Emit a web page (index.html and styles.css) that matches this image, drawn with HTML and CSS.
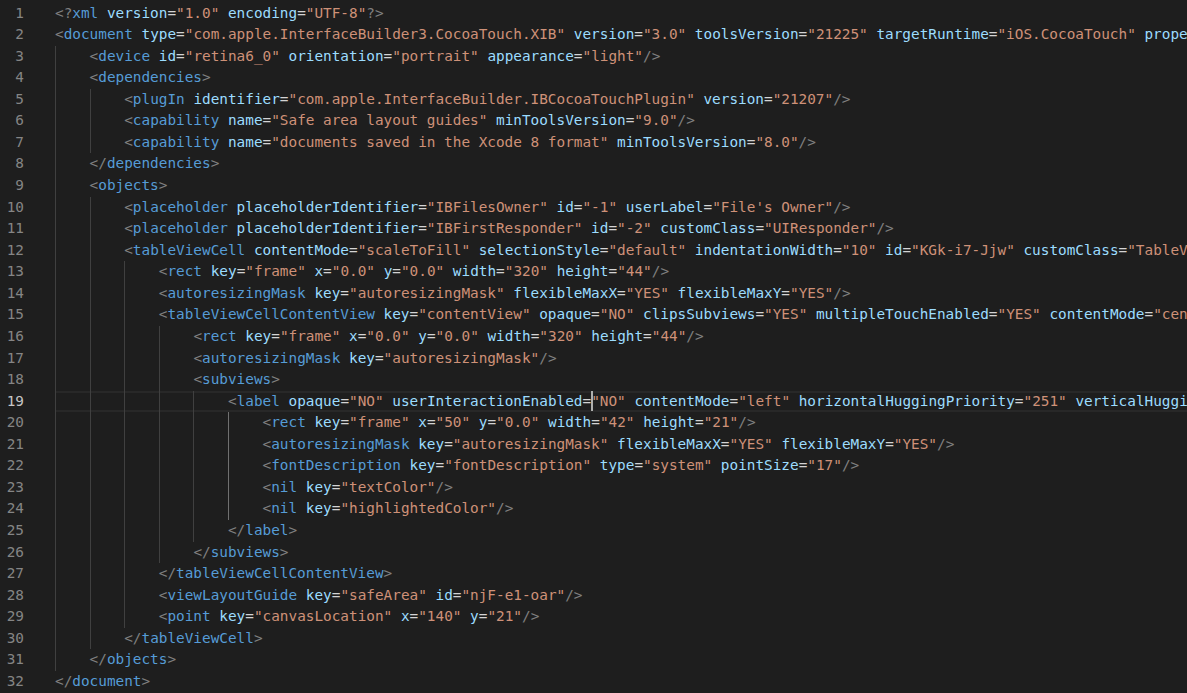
FILE: index.html
```html
<!DOCTYPE html>
<html>
<head>
<meta charset="utf-8">
<link rel="stylesheet" href="styles.css">
</head>
<body>
<div class="editor">
<div class="row"><span class="num">1</span><span class="code"><span class="b">&lt;?</span><span class="t">xml</span> <span class="a">version</span><span class="e">=</span><span class="s">"1.0"</span> <span class="a">encoding</span><span class="e">=</span><span class="s">"UTF-8"</span><span class="b">?&gt;</span></span></div>
<div class="row"><span class="num">2</span><span class="code"><span class="b">&lt;</span><span class="t">document</span> <span class="a">type</span><span class="e">=</span><span class="s">"com.apple.InterfaceBuilder3.CocoaTouch.XIB"</span> <span class="a">version</span><span class="e">=</span><span class="s">"3.0"</span> <span class="a">toolsVersion</span><span class="e">=</span><span class="s">"21225"</span> <span class="a">targetRuntime</span><span class="e">=</span><span class="s">"iOS.CocoaTouch"</span> <span class="a">propertyAccessControl</span><span class="e">=</span><span class="s">"none"</span> <span class="a">useAutolayout</span><span class="e">=</span><span class="s">"YES"</span><span class="b">&gt;</span></span></div>
<div class="row"><span class="num">3</span><span class="code"><span class="g">    </span><span class="b">&lt;</span><span class="t">device</span> <span class="a">id</span><span class="e">=</span><span class="s">"retina6_0"</span> <span class="a">orientation</span><span class="e">=</span><span class="s">"portrait"</span> <span class="a">appearance</span><span class="e">=</span><span class="s">"light"</span><span class="b">/&gt;</span></span></div>
<div class="row"><span class="num">4</span><span class="code"><span class="g">    </span><span class="b">&lt;</span><span class="t">dependencies</span><span class="b">&gt;</span></span></div>
<div class="row"><span class="num">5</span><span class="code"><span class="g">    </span><span class="g">    </span><span class="b">&lt;</span><span class="t">plugIn</span> <span class="a">identifier</span><span class="e">=</span><span class="s">"com.apple.InterfaceBuilder.IBCocoaTouchPlugin"</span> <span class="a">version</span><span class="e">=</span><span class="s">"21207"</span><span class="b">/&gt;</span></span></div>
<div class="row"><span class="num">6</span><span class="code"><span class="g">    </span><span class="g">    </span><span class="b">&lt;</span><span class="t">capability</span> <span class="a">name</span><span class="e">=</span><span class="s">"Safe area layout guides"</span> <span class="a">minToolsVersion</span><span class="e">=</span><span class="s">"9.0"</span><span class="b">/&gt;</span></span></div>
<div class="row"><span class="num">7</span><span class="code"><span class="g">    </span><span class="g">    </span><span class="b">&lt;</span><span class="t">capability</span> <span class="a">name</span><span class="e">=</span><span class="s">"documents saved in the Xcode 8 format"</span> <span class="a">minToolsVersion</span><span class="e">=</span><span class="s">"8.0"</span><span class="b">/&gt;</span></span></div>
<div class="row"><span class="num">8</span><span class="code"><span class="g">    </span><span class="b">&lt;/</span><span class="t">dependencies</span><span class="b">&gt;</span></span></div>
<div class="row"><span class="num">9</span><span class="code"><span class="g">    </span><span class="b">&lt;</span><span class="t">objects</span><span class="b">&gt;</span></span></div>
<div class="row"><span class="num">10</span><span class="code"><span class="g">    </span><span class="g">    </span><span class="b">&lt;</span><span class="t">placeholder</span> <span class="a">placeholderIdentifier</span><span class="e">=</span><span class="s">"IBFilesOwner"</span> <span class="a">id</span><span class="e">=</span><span class="s">"-1"</span> <span class="a">userLabel</span><span class="e">=</span><span class="s">"File's Owner"</span><span class="b">/&gt;</span></span></div>
<div class="row"><span class="num">11</span><span class="code"><span class="g">    </span><span class="g">    </span><span class="b">&lt;</span><span class="t">placeholder</span> <span class="a">placeholderIdentifier</span><span class="e">=</span><span class="s">"IBFirstResponder"</span> <span class="a">id</span><span class="e">=</span><span class="s">"-2"</span> <span class="a">customClass</span><span class="e">=</span><span class="s">"UIResponder"</span><span class="b">/&gt;</span></span></div>
<div class="row"><span class="num">12</span><span class="code"><span class="g">    </span><span class="g">    </span><span class="b">&lt;</span><span class="t">tableViewCell</span> <span class="a">contentMode</span><span class="e">=</span><span class="s">"scaleToFill"</span> <span class="a">selectionStyle</span><span class="e">=</span><span class="s">"default"</span> <span class="a">indentationWidth</span><span class="e">=</span><span class="s">"10"</span> <span class="a">id</span><span class="e">=</span><span class="s">"KGk-i7-Jjw"</span> <span class="a">customClass</span><span class="e">=</span><span class="s">"TableViewCell"</span><span class="b">&gt;</span></span></div>
<div class="row"><span class="num">13</span><span class="code"><span class="g">    </span><span class="g">    </span><span class="g">    </span><span class="b">&lt;</span><span class="t">rect</span> <span class="a">key</span><span class="e">=</span><span class="s">"frame"</span> <span class="a">x</span><span class="e">=</span><span class="s">"0.0"</span> <span class="a">y</span><span class="e">=</span><span class="s">"0.0"</span> <span class="a">width</span><span class="e">=</span><span class="s">"320"</span> <span class="a">height</span><span class="e">=</span><span class="s">"44"</span><span class="b">/&gt;</span></span></div>
<div class="row"><span class="num">14</span><span class="code"><span class="g">    </span><span class="g">    </span><span class="g">    </span><span class="b">&lt;</span><span class="t">autoresizingMask</span> <span class="a">key</span><span class="e">=</span><span class="s">"autoresizingMask"</span> <span class="a">flexibleMaxX</span><span class="e">=</span><span class="s">"YES"</span> <span class="a">flexibleMaxY</span><span class="e">=</span><span class="s">"YES"</span><span class="b">/&gt;</span></span></div>
<div class="row"><span class="num">15</span><span class="code"><span class="g">    </span><span class="g">    </span><span class="g">    </span><span class="b">&lt;</span><span class="t">tableViewCellContentView</span> <span class="a">key</span><span class="e">=</span><span class="s">"contentView"</span> <span class="a">opaque</span><span class="e">=</span><span class="s">"NO"</span> <span class="a">clipsSubviews</span><span class="e">=</span><span class="s">"YES"</span> <span class="a">multipleTouchEnabled</span><span class="e">=</span><span class="s">"YES"</span> <span class="a">contentMode</span><span class="e">=</span><span class="s">"center"</span><span class="b">&gt;</span></span></div>
<div class="row"><span class="num">16</span><span class="code"><span class="g">    </span><span class="g">    </span><span class="g">    </span><span class="g">    </span><span class="b">&lt;</span><span class="t">rect</span> <span class="a">key</span><span class="e">=</span><span class="s">"frame"</span> <span class="a">x</span><span class="e">=</span><span class="s">"0.0"</span> <span class="a">y</span><span class="e">=</span><span class="s">"0.0"</span> <span class="a">width</span><span class="e">=</span><span class="s">"320"</span> <span class="a">height</span><span class="e">=</span><span class="s">"44"</span><span class="b">/&gt;</span></span></div>
<div class="row"><span class="num">17</span><span class="code"><span class="g">    </span><span class="g">    </span><span class="g">    </span><span class="g">    </span><span class="b">&lt;</span><span class="t">autoresizingMask</span> <span class="a">key</span><span class="e">=</span><span class="s">"autoresizingMask"</span><span class="b">/&gt;</span></span></div>
<div class="row"><span class="num">18</span><span class="code"><span class="g">    </span><span class="g">    </span><span class="g">    </span><span class="g">    </span><span class="b">&lt;</span><span class="t">subviews</span><span class="b">&gt;</span></span></div>
<div class="row cur"><span class="num">19</span><span class="code"><span class="g">    </span><span class="g">    </span><span class="g">    </span><span class="g">    </span><span class="g">    </span><span class="b">&lt;</span><span class="t">label</span> <span class="a">opaque</span><span class="e">=</span><span class="s">"NO"</span> <span class="a">userInteractionEnabled</span><span class="e">=</span><span class="caret"></span><span class="s">"NO"</span> <span class="a">contentMode</span><span class="e">=</span><span class="s">"left"</span> <span class="a">horizontalHuggingPriority</span><span class="e">=</span><span class="s">"251"</span> <span class="a">verticalHuggingPriority</span><span class="e">=</span><span class="s">"251"</span><span class="b">&gt;</span></span></div>
<div class="row"><span class="num">20</span><span class="code"><span class="g">    </span><span class="g">    </span><span class="g">    </span><span class="g">    </span><span class="g">    </span><span class="g act">    </span><span class="b">&lt;</span><span class="t">rect</span> <span class="a">key</span><span class="e">=</span><span class="s">"frame"</span> <span class="a">x</span><span class="e">=</span><span class="s">"50"</span> <span class="a">y</span><span class="e">=</span><span class="s">"0.0"</span> <span class="a">width</span><span class="e">=</span><span class="s">"42"</span> <span class="a">height</span><span class="e">=</span><span class="s">"21"</span><span class="b">/&gt;</span></span></div>
<div class="row"><span class="num">21</span><span class="code"><span class="g">    </span><span class="g">    </span><span class="g">    </span><span class="g">    </span><span class="g">    </span><span class="g act">    </span><span class="b">&lt;</span><span class="t">autoresizingMask</span> <span class="a">key</span><span class="e">=</span><span class="s">"autoresizingMask"</span> <span class="a">flexibleMaxX</span><span class="e">=</span><span class="s">"YES"</span> <span class="a">flexibleMaxY</span><span class="e">=</span><span class="s">"YES"</span><span class="b">/&gt;</span></span></div>
<div class="row"><span class="num">22</span><span class="code"><span class="g">    </span><span class="g">    </span><span class="g">    </span><span class="g">    </span><span class="g">    </span><span class="g act">    </span><span class="b">&lt;</span><span class="t">fontDescription</span> <span class="a">key</span><span class="e">=</span><span class="s">"fontDescription"</span> <span class="a">type</span><span class="e">=</span><span class="s">"system"</span> <span class="a">pointSize</span><span class="e">=</span><span class="s">"17"</span><span class="b">/&gt;</span></span></div>
<div class="row"><span class="num">23</span><span class="code"><span class="g">    </span><span class="g">    </span><span class="g">    </span><span class="g">    </span><span class="g">    </span><span class="g act">    </span><span class="b">&lt;</span><span class="t">nil</span> <span class="a">key</span><span class="e">=</span><span class="s">"textColor"</span><span class="b">/&gt;</span></span></div>
<div class="row"><span class="num">24</span><span class="code"><span class="g">    </span><span class="g">    </span><span class="g">    </span><span class="g">    </span><span class="g">    </span><span class="g act">    </span><span class="b">&lt;</span><span class="t">nil</span> <span class="a">key</span><span class="e">=</span><span class="s">"highlightedColor"</span><span class="b">/&gt;</span></span></div>
<div class="row"><span class="num">25</span><span class="code"><span class="g">    </span><span class="g">    </span><span class="g">    </span><span class="g">    </span><span class="g">    </span><span class="b">&lt;/</span><span class="t">label</span><span class="b">&gt;</span></span></div>
<div class="row"><span class="num">26</span><span class="code"><span class="g">    </span><span class="g">    </span><span class="g">    </span><span class="g">    </span><span class="b">&lt;/</span><span class="t">subviews</span><span class="b">&gt;</span></span></div>
<div class="row"><span class="num">27</span><span class="code"><span class="g">    </span><span class="g">    </span><span class="g">    </span><span class="b">&lt;/</span><span class="t">tableViewCellContentView</span><span class="b">&gt;</span></span></div>
<div class="row"><span class="num">28</span><span class="code"><span class="g">    </span><span class="g">    </span><span class="g">    </span><span class="b">&lt;</span><span class="t">viewLayoutGuide</span> <span class="a">key</span><span class="e">=</span><span class="s">"safeArea"</span> <span class="a">id</span><span class="e">=</span><span class="s">"njF-e1-oar"</span><span class="b">/&gt;</span></span></div>
<div class="row"><span class="num">29</span><span class="code"><span class="g">    </span><span class="g">    </span><span class="g">    </span><span class="b">&lt;</span><span class="t">point</span> <span class="a">key</span><span class="e">=</span><span class="s">"canvasLocation"</span> <span class="a">x</span><span class="e">=</span><span class="s">"140"</span> <span class="a">y</span><span class="e">=</span><span class="s">"21"</span><span class="b">/&gt;</span></span></div>
<div class="row"><span class="num">30</span><span class="code"><span class="g">    </span><span class="g">    </span><span class="b">&lt;/</span><span class="t">tableViewCell</span><span class="b">&gt;</span></span></div>
<div class="row"><span class="num">31</span><span class="code"><span class="g">    </span><span class="b">&lt;/</span><span class="t">objects</span><span class="b">&gt;</span></span></div>
<div class="row"><span class="num">32</span><span class="code"><span class="b">&lt;/</span><span class="t">document</span><span class="b">&gt;</span></span></div>
</div>
</body>
</html>
```
FILE: styles.css
```css
html, body {
  margin: 0;
  padding: 0;
  height: 100%;
  background: #1e1e1e;
  overflow: hidden;
}
.editor {
  padding-top: 2.5px;
  font-family: "DejaVu Sans Mono", monospace;
  font-size: 14.37px;
  line-height: 21.57px;
  color: #d4d4d4;
}
.row {
  display: flex;
  height: 21.57px;
}
.num {
  flex: none;
  width: 24px;
  padding-right: 31px;
  text-align: right;
  color: #858585;
}
.row.cur .num {
  color: #c6c6c6;
}
.code {
  flex: 1;
  min-width: 0;
  white-space: pre;
  overflow: hidden;
}
.row.cur .code {
  box-shadow: inset 0 2px #282828, inset 0 -2px #282828;
}
.g {
  display: inline-block;
  height: 21.57px;
  vertical-align: top;
  box-shadow: inset 1px 0 #404040;
}
.g.act {
  box-shadow: inset 1px 0 #707070;
}
.b { color: #808080; }
.t { color: #569cd6; }
.a { color: #9cdcfe; }
.s { color: #ce9178; }
.e { color: #d4d4d4; }
.caret {
  display: inline-block;
  width: 0;
  height: 21.57px;
  vertical-align: top;
  position: relative;
}
.caret::after {
  content: "";
  position: absolute;
  left: 0;
  top: 0;
  width: 2px;
  height: 20px;
  background: #aeafad;
}
```
